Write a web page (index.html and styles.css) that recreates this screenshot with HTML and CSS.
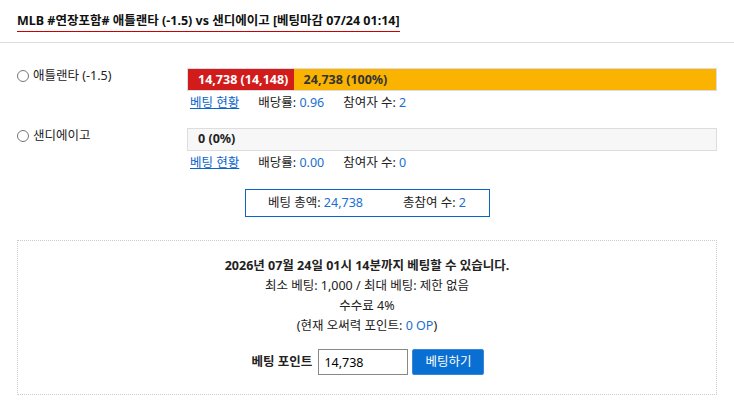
FILE: index.html
```html
<!DOCTYPE html>
<html lang="ko">
<head>
  <meta charset="UTF-8">
  <title>베팅</title>
  <meta name="viewport" content="width=device-width, initial-scale=1.0">
  <link rel="stylesheet" href="styles.css">
</head>
<body>
  <div class="head">
    <h1 class="title">MLB #연장포함# 애틀랜타 (-1.5) vs 샌디에이고 [베팅마감 07/24 01:14]</h1>
  </div>

  <div class="wrap">
    <div class="team">
      <label class="pick"><input type="radio" name="team"> 애틀랜타 (-1.5)</label>
      <div class="side">
        <div class="bar">
          <span class="seg red" style="width: 20%">14,738 (14,148)</span>
          <span class="seg orange" style="width: 80%">24,738 (100%)</span>
        </div>
        <div class="info">
          <a href="#">베팅 현황</a>
          <span>배당률: <b class="num">0.96</b></span>
          <span>참여자 수: <b class="num">2</b></span>
        </div>
      </div>
    </div>

    <div class="team">
      <label class="pick"><input type="radio" name="team"> 샌디에이고</label>
      <div class="side">
        <div class="bar empty">
          <span class="seg">0 (0%)</span>
        </div>
        <div class="info">
          <a href="#">베팅 현황</a>
          <span>배당률: <b class="num">0.00</b></span>
          <span>참여자 수: <b class="num">0</b></span>
        </div>
      </div>
    </div>

    <div class="total">
      <span>베팅 총액: <b class="num">24,738</b></span>
      <span>총참여 수: <b class="num">2</b></span>
    </div>

    <div class="betbox">
      <p class="deadline">2026년 07월 24일 01시 14분까지 베팅할 수 있습니다.</p>
      <p>최소 베팅: 1,000 / 최대 베팅: 제한 없음</p>
      <p>수수료 4%</p>
      <p>(현재 오써력 포인트: <b class="num">0 OP</b>)</p>
      <form class="betform" onsubmit="return false">
        <label>베팅 포인트</label>
        <input type="text" value="14,738">
        <button type="submit">베팅하기</button>
      </form>
    </div>
  </div>
</body>
</html>
```

FILE: styles.css
```css
body { margin: 0; font-family: "Noto Sans", "Noto Sans CJK KR", sans-serif; font-size: 12.5px; color: #222; line-height: 1.4; }
.head { border-bottom: 1px solid #ddd; padding: 12px 17px 0; height: 30px; }
.title { display: inline-block; margin: 0; font-size: 12.5px; font-weight: 700; line-height: 18px; padding-bottom: 1px; border-bottom: 1px solid #c00; color: #111; }
.wrap { padding: 25px 17px 0; }
.team { display: grid; grid-template-columns: 170px 1fr; margin-bottom: 16px; }
.pick { display: flex; align-items: center; gap: 4px; height: 14px; margin-top: 1px; }
.pick input { margin: 0; width: 12px; height: 12px; }
.bar { display: flex; height: 21px; border: 1px solid #ddd; background: #f7f7f7; }
.seg { display: flex; align-items: center; padding-left: 10px; font-weight: bold; white-space: nowrap; box-sizing: border-box; }
.red { background: #d21b1b; color: #fff; }
.orange { background: #f9b300; color: #333; }
.info { display: flex; gap: 19px; padding: 3px 0 0 3px; }
.info a { color: #0a63c9; }
.num { font-weight: normal; color: #1a6fd0; }
.total { width: 243px; margin: 18px auto 0; border: 1px solid #0a66c8; height: 26px; display: flex; justify-content: center; align-items: center; gap: 40px; }
.betbox { margin-top: 23px; border: 1px dotted #ccc; height: 155px; text-align: center; padding-top: 15px; box-sizing: border-box; }
.betbox p { margin: 0; line-height: 20px; }
.deadline { font-weight: bold; }
.betform { display: flex; justify-content: center; align-items: center; gap: 4px; margin-top: 13px; margin-left: 2px; }
.betform label { font-weight: bold; margin-right: 2px; }
.betform input { width: 90px; height: 26px; box-sizing: border-box; border: 1px solid #888; padding: 0 5px; font: inherit; }
.betform button { height: 26px; padding: 0 12px; background: #0a6fd2; color: #fff; border: 1px solid #3a86d6; border-radius: 2px; font: inherit; cursor: pointer; }
```
